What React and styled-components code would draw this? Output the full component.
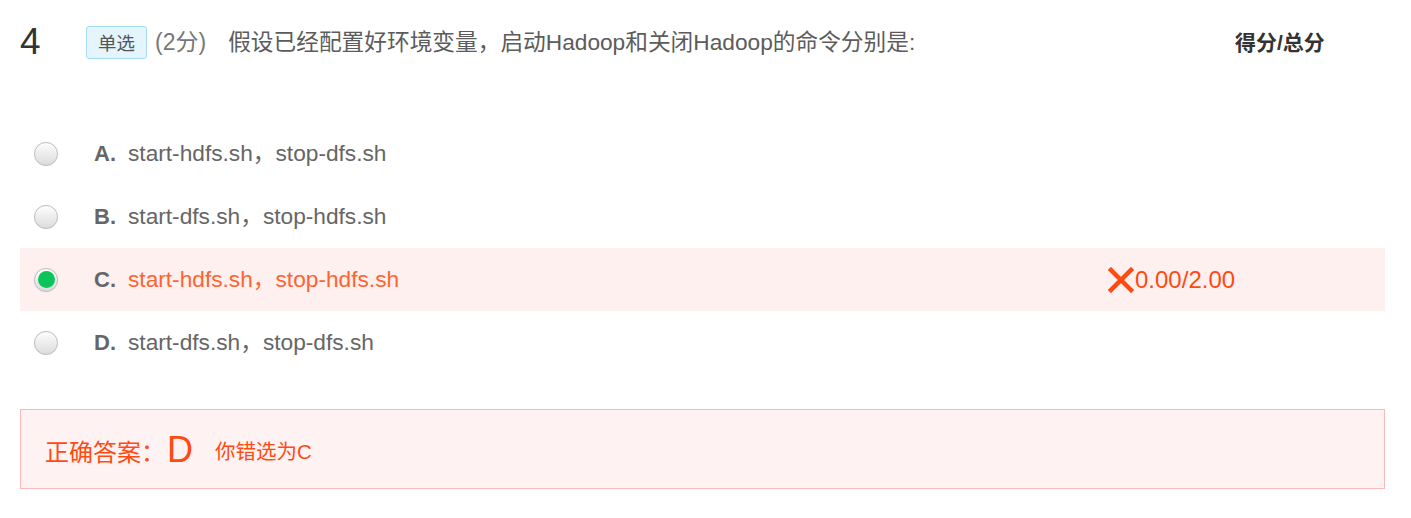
import React from "react";
import styled, { createGlobalStyle } from "styled-components";

const GlobalStyle = createGlobalStyle`
  body {
    margin: 0;
    background: #fff;
    font-family: "Liberation Sans", Arial, "Noto Sans CJK SC", sans-serif;
  }
`;

const Page = styled.div`
  width: 1365px;
  margin-left: 20px;
  padding-top: 20px;
`;

const Header = styled.div`
  display: flex;
  align-items: center;
  height: 44px;
`;

const Number = styled.div`
  width: 66px;
  font-size: 37px;
  color: #333;
  line-height: 44px;
`;

const Tag = styled.span`
  display: inline-flex;
  align-items: center;
  height: 31px;
  padding: 0 11px;
  border: 1px solid #a8dcf5;
  border-radius: 3px;
  background: #e4f5fd;
  color: #555;
  font-size: 18.5px;
`;

const Points = styled.span`
  margin-left: 8px;
  font-size: 23px;
  color: #777;
  margin-bottom: 4px;
`;

const Question = styled.span`
  margin-left: 22px;
  margin-bottom: 4px;
  font-size: 22.7px;
  color: #5c5c5c;
  flex: 1;
`;

const ScoreHead = styled.div`
  width: 150px;
  font-size: 21px;
  font-weight: bold;
  color: #333;
  margin-bottom: 2px;
`;

const Options = styled.div`
  margin-top: 58px;
`;

const Option = styled.div`
  display: flex;
  align-items: center;
  height: 63px;
  background: ${(p) => (p.$wrong ? "#fff0f0" : "transparent")};
`;

const Radio = styled.span`
  width: 24px;
  height: 24px;
  margin-left: 14px;
  border-radius: 50%;
  box-sizing: border-box;
  border: 1px solid #bdbdbd;
  background: linear-gradient(#fdfdfd, #dcdcdc);
  box-shadow: 0 0 1px rgba(0, 0, 0, 0.15), inset 0 1px 1px #fff;
  display: flex;
  align-items: center;
  justify-content: center;

  &::after {
    content: "";
    display: ${(p) => (p.$checked ? "block" : "none")};
    width: 17px;
    height: 17px;
    border-radius: 50%;
    background: #0bc55a;
  }
`;

const Label = styled.div`
  flex: 1;
  display: flex;
  align-items: baseline;
  margin-left: 36px;
  padding-bottom: 5px;
`;

const Letter = styled.span`
  width: 34px;
  font-size: 22px;
  font-weight: bold;
  color: #666;
`;

const OptionText = styled.span`
  font-size: 22.7px;
  color: ${(p) => (p.$wrong ? "#fe6430" : "#666")};
`;

const Score = styled.span`
  width: 277px;
  display: flex;
  align-items: center;
  font-size: 24px;
  color: #ff4a12;

  svg {
    margin-right: 1px;
  }
`;

const AnswerBox = styled.div`
  margin-top: 35px;
  height: 80px;
  box-sizing: border-box;
  border: 1px solid #f9b9b9;
  background: #fff2f2;
  display: flex;
  align-items: center;
  padding: 2px 0 0 24px;
  color: #ff4a12;
`;

const AnswerLabel = styled.span`
  font-size: 24px;
`;

const AnswerKey = styled.span`
  font-size: 36px;
  margin-left: 2px;
`;

const AnswerNote = styled.span`
  font-size: 20.5px;
  margin-left: 22px;
`;

const options = [
  { key: "A", text: "start-hdfs.sh，stop-dfs.sh" },
  { key: "B", text: "start-dfs.sh，stop-hdfs.sh" },
  { key: "C", text: "start-hdfs.sh，stop-hdfs.sh", chosen: true },
  { key: "D", text: "start-dfs.sh，stop-dfs.sh" },
];

function Cross() {
  return (
    <svg width="26" height="26" viewBox="0 0 26 26">
      <path d="M3 3 L23 23 M23 3 L3 23" stroke="#ff4a12" strokeWidth="4.5" strokeLinecap="square" />
    </svg>
  );
}

export default function App() {
  return (
    <>
      <GlobalStyle />
      <Page>
        <Header>
          <Number>4</Number>
          <Tag>单选</Tag>
          <Points>(2分)</Points>
          <Question>假设已经配置好环境变量，启动Hadoop和关闭Hadoop的命令分别是:</Question>
          <ScoreHead>得分/总分</ScoreHead>
        </Header>
        <Options>
          {options.map((o) => (
            <Option key={o.key} $wrong={o.chosen}>
              <Radio $checked={o.chosen} />
              <Label>
                <Letter>{o.key}.</Letter>
                <OptionText $wrong={o.chosen}>{o.text}</OptionText>
              </Label>
              {o.chosen && (
                <Score>
                  <Cross />
                  0.00/2.00
                </Score>
              )}
            </Option>
          ))}
        </Options>
        <AnswerBox>
          <AnswerLabel>正确答案：</AnswerLabel>
          <AnswerKey>D</AnswerKey>
          <AnswerNote>你错选为C</AnswerNote>
        </AnswerBox>
      </Page>
    </>
  );
}
